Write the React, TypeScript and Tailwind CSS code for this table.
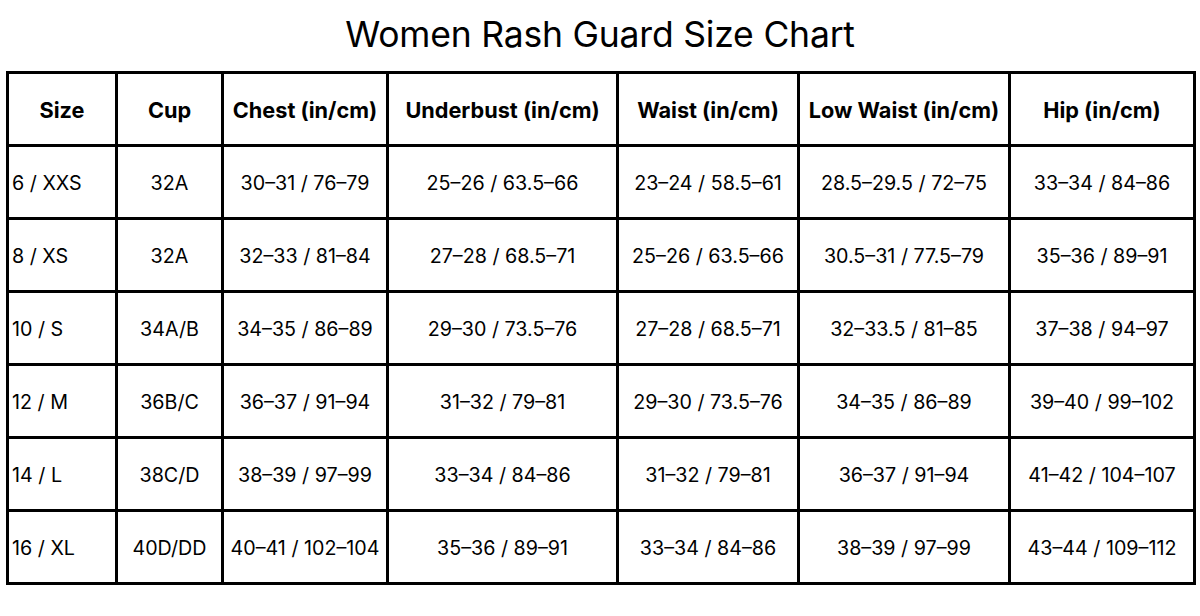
import React from "react";

const headers = ["Size", "Cup", "Chest (in/cm)", "Underbust (in/cm)", "Waist (in/cm)", "Low Waist (in/cm)", "Hip (in/cm)"];

const rows: string[][] = [
  ["6 / XXS", "32A", "30–31 / 76–79", "25–26 / 63.5–66", "23–24 / 58.5–61", "28.5–29.5 / 72–75", "33–34 / 84–86"],
  ["8 / XS", "32A", "32–33 / 81–84", "27–28 / 68.5–71", "25–26 / 63.5–66", "30.5–31 / 77.5–79", "35–36 / 89–91"],
  ["10 / S", "34A/B", "34–35 / 86–89", "29–30 / 73.5–76", "27–28 / 68.5–71", "32–33.5 / 81–85", "37–38 / 94–97"],
  ["12 / M", "36B/C", "36–37 / 91–94", "31–32 / 79–81", "29–30 / 73.5–76", "34–35 / 86–89", "39–40 / 99–102"],
  ["14 / L", "38C/D", "38–39 / 97–99", "33–34 / 84–86", "31–32 / 79–81", "36–37 / 91–94", "41–42 / 104–107"],
  ["16 / XL", "40D/DD", "40–41 / 102–104", "35–36 / 89–91", "33–34 / 84–86", "38–39 / 97–99", "43–44 / 109–112"],
];

export default function App() {
  return (
    <div
      className="w-[1200px] h-[616px] bg-white text-black overflow-hidden"
      style={{ fontFamily: "Inter, 'Noto Sans', sans-serif" }}
    >
      <div className="h-[71px] flex items-start justify-center pt-[12px]">
        <h1 className="text-[35.5px] leading-[46px] font-normal tracking-[-0.2px]">Women Rash Guard Size Chart</h1>
      </div>
      <div className="ml-[6px] w-[1190px] bg-black p-[3px] grid grid-cols-[106px_103px_162px_227px_178px_208px_182px] auto-rows-[70px] gap-[3px]">
        {headers.map((h) => (
          <div key={h} className="bg-white flex items-center justify-center text-[21.7px] font-bold pt-[2px]">
            {h}
          </div>
        ))}
        {rows.map((r, ri) =>
          r.map((c, ci) => (
            <div
              key={ri + "-" + ci}
              className={
                "bg-white flex items-center text-[19.7px] font-normal pt-[3px] " +
                (ci === 0 ? "justify-start pl-[3px]" : "justify-center")
              }
            >
              {c}
            </div>
          ))
        )}
      </div>
    </div>
  );
}
